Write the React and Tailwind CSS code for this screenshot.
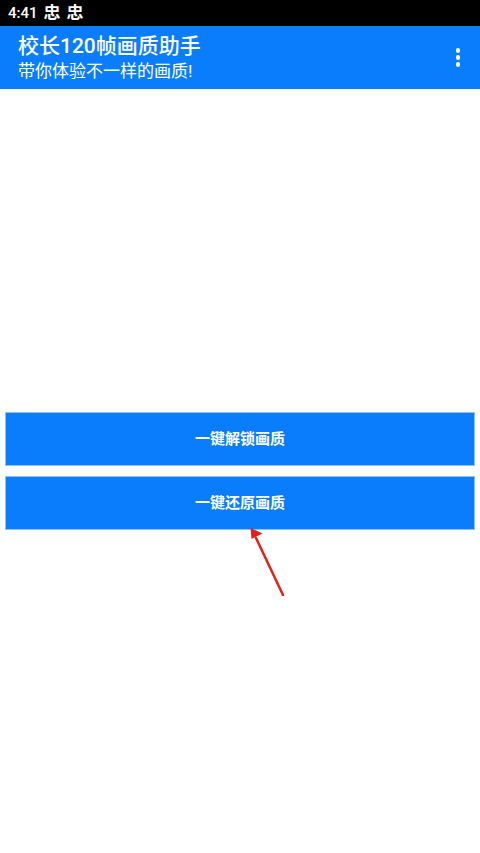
import React from "react";

const font = { fontFamily: '"Roboto", "Noto Sans CJK SC", sans-serif' };

const StatusIcon = () => (
  <span className="text-[17px] font-bold leading-none text-white">忠</span>
);

const App = () => {
  return (
    <div
      className="relative w-[480px] h-[853px] bg-white overflow-hidden"
      style={font}
    >
      {/* status bar */}
      <div className="h-[26px] bg-black flex items-center pl-[8px] gap-[6px]">
        <span className="text-[15px] font-medium text-white leading-none">4:41</span>
        <StatusIcon />
        <StatusIcon />
      </div>

      {/* app bar */}
      <div className="h-[63px] bg-[#0a7dfc] flex items-center justify-between pl-[18px] pr-[20px]">
        <div className="flex flex-col text-white">
          <span className="text-[21px] leading-[26px] font-medium">校长120帧画质助手</span>
          <span className="text-[17px] leading-[22px] mt-[1px]">带你体验不一样的画质!</span>
        </div>
        <div className="flex flex-col gap-[2.5px]">
          <span className="w-[4.5px] h-[4.5px] rounded-full bg-white" />
          <span className="w-[4.5px] h-[4.5px] rounded-full bg-white" />
          <span className="w-[4.5px] h-[4.5px] rounded-full bg-white" />
        </div>
      </div>

      {/* buttons */}
      <div className="pt-[323px] px-[5px] flex flex-col gap-[10px]">
        <button className="h-[54px] w-full bg-[#0a7dfc] border border-[#8cc2fb] text-white text-[15px] font-bold flex items-center justify-center">
          一键解锁画质
        </button>
        <button className="h-[54px] w-full bg-[#0a7dfc] border border-[#8cc2fb] text-white text-[15px] font-bold flex items-center justify-center">
          一键还原画质
        </button>
      </div>

      {/* red annotation arrow */}
      <svg
        className="absolute left-0 top-0 pointer-events-none"
        width="480"
        height="853"
        viewBox="0 0 480 853"
      >
        <line x1="283" y1="595" x2="256" y2="538" stroke="#e3211b" strokeWidth="2.5" strokeLinecap="round" />
        <polygon points="250.5,528 262.5,533.5 251.5,539" fill="#e3211b" />
      </svg>
    </div>
  );
};

export default App;
